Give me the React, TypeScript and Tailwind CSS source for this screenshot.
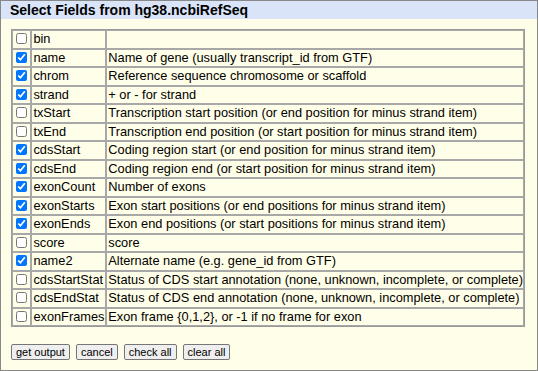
import React from 'react';

type Field = { name: string; desc: string; on: boolean };

const fields: Field[] = [
  { name: 'bin', desc: '', on: false },
  { name: 'name', desc: 'Name of gene (usually transcript_id from GTF)', on: true },
  { name: 'chrom', desc: 'Reference sequence chromosome or scaffold', on: true },
  { name: 'strand', desc: '+ or - for strand', on: true },
  { name: 'txStart', desc: 'Transcription start position (or end position for minus strand item)', on: false },
  { name: 'txEnd', desc: 'Transcription end position (or start position for minus strand item)', on: false },
  { name: 'cdsStart', desc: 'Coding region start (or end position for minus strand item)', on: true },
  { name: 'cdsEnd', desc: 'Coding region end (or start position for minus strand item)', on: true },
  { name: 'exonCount', desc: 'Number of exons', on: true },
  { name: 'exonStarts', desc: 'Exon start positions (or end positions for minus strand item)', on: true },
  { name: 'exonEnds', desc: 'Exon end positions (or start positions for minus strand item)', on: true },
  { name: 'score', desc: 'score', on: false },
  { name: 'name2', desc: 'Alternate name (e.g. gene_id from GTF)', on: true },
  { name: 'cdsStartStat', desc: 'Status of CDS start annotation (none, unknown, incomplete, or complete)', on: false },
  { name: 'cdsEndStat', desc: 'Status of CDS end annotation (none, unknown, incomplete, or complete)', on: false },
  { name: 'exonFrames', desc: 'Exon frame {0,1,2}, or -1 if no frame for exon', on: false },
];

const buttons = ['get output', 'cancel', 'check all', 'clear all'];

const App: React.FC = () => {
  return (
    <div className="w-[538px] h-[371px] border border-[#888888] bg-[#fffee8] text-black font-['Liberation_Sans',Arial,sans-serif] text-[12.8px] overflow-hidden">
      {/* title bar */}
      <div className="h-[18px] bg-[#d9e4f8] pl-[9px] text-[14px] font-bold leading-[18px] whitespace-nowrap">
        Select Fields from hg38.ncbiRefSeq
      </div>

      <div className="px-[10px] pt-[10px]">
        <table className="w-[514px] border border-[#999999] border-separate border-spacing-0">
          <tbody>
            {fields.map((f) => (
              <tr key={f.name}>
                <td className="w-[20px] border border-[#a8a8a8] p-0 leading-[16.5px] text-center align-middle">
                  <input
                    type="checkbox"
                    defaultChecked={f.on}
                    className="w-[11px] h-[11px] m-0 align-middle accent-[#0075ff] relative top-[-1px]"
                  />
                </td>
                <td className="w-[75px] border border-[#a8a8a8] pl-px pr-0 py-0 leading-[16.5px] whitespace-nowrap">
                  {f.name}
                </td>
                <td className="border border-[#a8a8a8] pl-px pr-0 py-0 leading-[16.5px] whitespace-nowrap">
                  {f.desc}
                </td>
              </tr>
            ))}
          </tbody>
        </table>

        <div className="flex gap-[6px] mt-[17px]">
          {buttons.map((b) => (
            <button
              key={b}
              className="h-[16px] px-[4px] bg-[#efefef] border border-[#767676] rounded-[2px] text-[11px] leading-[14px]"
            >
              {b}
            </button>
          ))}
        </div>
      </div>
    </div>
  );
};

export default App;
